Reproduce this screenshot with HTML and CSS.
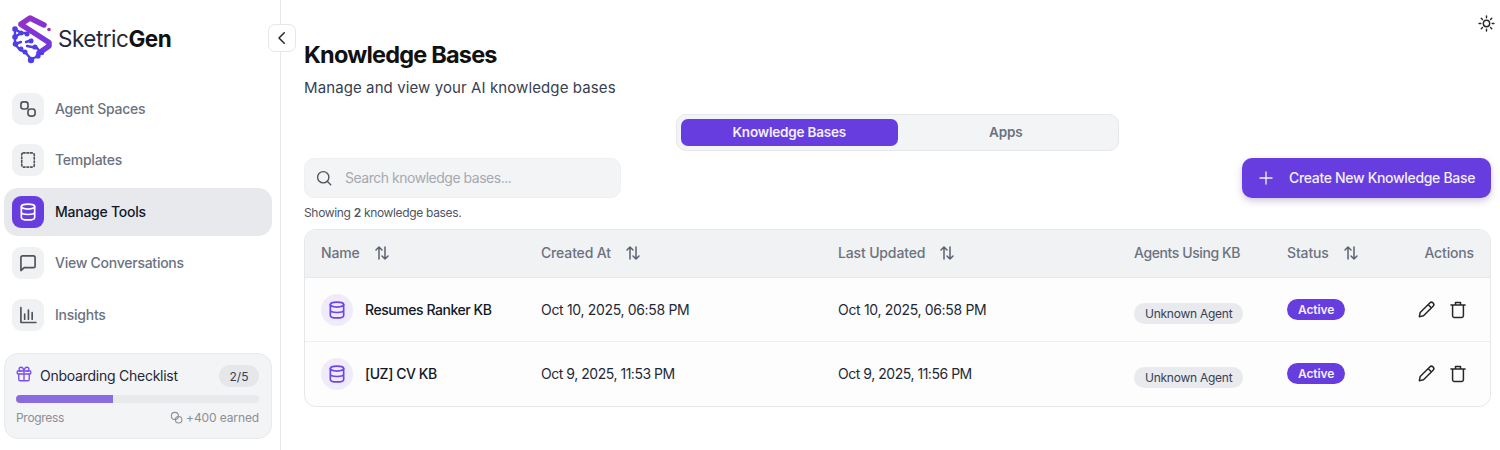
FILE: index.html
```html
<!DOCTYPE html>
<html lang="en">
<head>
<meta charset="utf-8">
<title>Knowledge Bases</title>
<link rel="stylesheet" href="styles.css">
</head>
<body>
<div class="app">
  <aside class="sidebar">
    <div class="brand">
      <svg class="logo" viewBox="0 0 40 50" width="40" height="50">
        <defs>
          <linearGradient id="lg" x1="6" y1="0" x2="40" y2="38" gradientUnits="userSpaceOnUse">
            <stop offset="0" stop-color="#9a2fc4"/><stop offset="1" stop-color="#6a3ae2"/>
          </linearGradient>
        </defs>
        <path class="logo-s" d="M9 10 18 4 32 11M9 10.500 37 28.500V32L27 39"/>
        <circle class="logo-dot" cx="37" cy="15.500" r="1.800"/>
        <path class="logo-net" d="M3 15V30L8 36 13 38 19 45 27 42M3 15 9 19 14 19M3 23 9 19M3 30 9 28M14 28 20 26M15 32 25 34 29 39"/>
        <g class="logo-nodes">
          <circle cx="3" cy="15" r="2.800"/><circle cx="3" cy="23" r="2.800"/><circle cx="3.500" cy="30" r="2.800"/>
          <circle cx="9" cy="19" r="2.500"/><circle cx="15" cy="20" r="2.500"/><circle cx="9" cy="35" r="2.500"/>
          <circle cx="13" cy="38" r="2.500"/><circle cx="19" cy="46" r="3.200"/><circle cx="26" cy="42" r="2.600"/>
          <circle cx="30" cy="39" r="2.200"/><circle cx="23" cy="33" r="2.600"/><circle cx="19" cy="27" r="2.500"/>
        </g>
      </svg>
      <div class="wordmark">Sketric<b>Gen</b></div>
    </div>
    <nav class="nav">
      <a class="nav-item">
        <span class="nav-icon"><svg class="ic" viewBox="0 0 24 24"><rect x="3.500" y="3.500" width="8.500" height="8.500" rx="3"/><rect x="12" y="12" width="8.500" height="8.500" rx="3"/></svg></span>
        <span class="nav-label">Agent Spaces</span>
      </a>
      <a class="nav-item">
        <span class="nav-icon"><svg class="ic" viewBox="0 0 24 24"><rect class="dash" x="4.500" y="3.500" width="15" height="17" rx="2"/></svg></span>
        <span class="nav-label">Templates</span>
      </a>
      <a class="nav-item active">
        <span class="nav-icon"><svg class="ic" viewBox="0 0 24 24"><ellipse cx="12" cy="5.500" rx="8" ry="3"/><path d="M4 5.500v13c0 1.700 3.600 3 8 3s8-1.300 8-3v-13M4 12c0 1.700 3.600 3 8 3s8-1.300 8-3"/></svg></span>
        <span class="nav-label">Manage Tools</span>
      </a>
      <a class="nav-item">
        <span class="nav-icon"><svg class="ic" viewBox="0 0 24 24"><path d="M3.500 5.500a2 2 0 0 1 2-2h13a2 2 0 0 1 2 2v10a2 2 0 0 1-2 2H7.500l-4 3.500z"/></svg></span>
        <span class="nav-label">View Conversations</span>
      </a>
      <a class="nav-item">
        <span class="nav-icon"><svg class="ic" viewBox="0 0 24 24"><path d="M3.500 3v18h18M8 17v-6M12.500 17V6M17 17v-8"/></svg></span>
        <span class="nav-label">Insights</span>
      </a>
    </nav>
    <section class="checklist">
      <div class="check-head">
        <svg class="gift" viewBox="0 0 24 24"><rect x="3" y="8" width="18" height="4" rx="1"/><path d="M5 12v7a2 2 0 0 0 2 2h10a2 2 0 0 0 2-2v-7M12 8v13M12 8S11 3 8 3a2.500 2.500 0 0 0 0 5M12 8s1-5 4-5a2.500 2.500 0 0 1 0 5"/></svg>
        <span class="check-title">Onboarding Checklist</span>
        <span class="check-count">2/5</span>
      </div>
      <div class="progress"><div class="progress-fill"></div></div>
      <div class="check-foot">
        <span>Progress</span>
        <span class="earned"><svg class="coins" viewBox="0 0 24 24"><circle cx="9" cy="9" r="6.500"/><circle cx="16" cy="16" r="6"/></svg>+400 earned</span>
      </div>
    </section>
  </aside>
  <button class="collapse" aria-label="Collapse"><svg class="ic" viewBox="0 0 24 24"><path d="M15 5l-7 7 7 7"/></svg></button>
  <main class="main">
    <div class="top"><svg class="sun" viewBox="0 0 24 24"><circle cx="12" cy="12" r="4.500"/><path d="M12 1.500v2.500M12 20v2.500M1.500 12H4M20 12h2.500M4.600 4.600l1.700 1.700M17.700 17.700l1.700 1.700M4.600 19.400l1.700-1.700M17.700 6.300l1.700-1.700"/></svg></div>
    <h1 class="title">Knowledge Bases</h1>
    <p class="subtitle">Manage and view your AI knowledge bases</p>
    <div class="tabs-wrap">
      <div class="tabs">
        <div class="tab on">Knowledge Bases</div>
        <div class="tab">Apps</div>
      </div>
    </div>
    <div class="toolbar">
      <div class="search">
        <svg class="search-ic" viewBox="0 0 24 24"><circle cx="11" cy="11" r="7.500"/><path d="M21 21l-4.700-4.700"/></svg>
        <span class="search-text">Search knowledge bases...</span>
      </div>
      <button class="create"><svg class="plus" viewBox="0 0 24 24"><path d="M12 4v16M4 12h16"/></svg><span class="create-text">Create New Knowledge Base</span></button>
    </div>
    <p class="count">Showing <b>2</b> knowledge bases.</p>
    <div class="table">
      <div class="row head">
        <div class="cell">Name<svg class="sort" viewBox="0 0 24 24"><path d="M8 20V4M4 8l4-4 4 4M16 4v16M12 16l4 4 4-4"/></svg></div>
        <div class="cell">Created At<svg class="sort" viewBox="0 0 24 24"><path d="M8 20V4M4 8l4-4 4 4M16 4v16M12 16l4 4 4-4"/></svg></div>
        <div class="cell">Last Updated<svg class="sort" viewBox="0 0 24 24"><path d="M8 20V4M4 8l4-4 4 4M16 4v16M12 16l4 4 4-4"/></svg></div>
        <div class="cell tight">Agents Using KB</div>
        <div class="cell">Status<svg class="sort" viewBox="0 0 24 24"><path d="M8 20V4M4 8l4-4 4 4M16 4v16M12 16l4 4 4-4"/></svg></div>
        <div class="cell end">Actions</div>
      </div>
      <div class="row body">
        <div class="cell name"><span class="db"><svg viewBox="0 0 24 24"><ellipse cx="12" cy="5.500" rx="8" ry="3"/><path d="M4 5.500v13c0 1.700 3.600 3 8 3s8-1.300 8-3v-13M4 12c0 1.700 3.600 3 8 3s8-1.300 8-3"/></svg></span>Resumes Ranker KB</div>
        <div class="cell">Oct 10, 2025, 06:58 PM</div>
        <div class="cell">Oct 10, 2025, 06:58 PM</div>
        <div class="cell"><span class="agent">Unknown Agent</span></div>
        <div class="cell"><span class="status">Active</span></div>
        <div class="cell actions">
          <svg viewBox="0 0 24 24"><path d="M4 20l1-5L16.500 3.500a2.800 2.800 0 0 1 4 4L9 19zM14.500 5.500l4 4"/></svg>
          <svg viewBox="0 0 24 24"><path d="M3.500 6h17M9 6V3h6v3M5.500 6v13a2 2 0 0 0 2 2h9a2 2 0 0 0 2-2V6"/></svg>
        </div>
      </div>
      <div class="row body">
        <div class="cell name"><span class="db"><svg viewBox="0 0 24 24"><ellipse cx="12" cy="5.500" rx="8" ry="3"/><path d="M4 5.500v13c0 1.700 3.600 3 8 3s8-1.300 8-3v-13M4 12c0 1.700 3.600 3 8 3s8-1.300 8-3"/></svg></span>[UZ] CV KB</div>
        <div class="cell short">Oct 9, 2025, 11:53 PM</div>
        <div class="cell short">Oct 9, 2025, 11:56 PM</div>
        <div class="cell"><span class="agent">Unknown Agent</span></div>
        <div class="cell"><span class="status">Active</span></div>
        <div class="cell actions">
          <svg viewBox="0 0 24 24"><path d="M4 20l1-5L16.500 3.500a2.800 2.800 0 0 1 4 4L9 19zM14.500 5.500l4 4"/></svg>
          <svg viewBox="0 0 24 24"><path d="M3.500 6h17M9 6V3h6v3M5.500 6v13a2 2 0 0 0 2 2h9a2 2 0 0 0 2-2V6"/></svg>
        </div>
      </div>
    </div>
  </main>
</div>
</body>
</html>
```
FILE: styles.css
```css
* { box-sizing: border-box; }
html, body { margin: 0; height: 450px; overflow: hidden; background: #fff; }
body { font-family: "Inter", "Noto Sans", sans-serif; color: #111827; font-size: 14px; }
svg { fill: none; stroke: currentColor; stroke-width: 2; stroke-linecap: round; stroke-linejoin: round; display: block; }
.app { display: flex; height: 450px; position: relative; }

.sidebar { width: 281px; flex: none; border-right: 1px solid #e5e7eb; padding: 14px 8px 11px 4px; display: flex; flex-direction: column; }
.brand { display: flex; align-items: center; height: 50px; padding-left: 8px; gap: 6px; }
.logo { flex: none; width: 40px; height: 50px; }
.logo-s { stroke: url(#lg); stroke-width: 5.500; stroke-linecap: round; }
.logo-dot { fill: #a02fc0; stroke: none; }
.logo-net { stroke: #4f3fe6; stroke-width: 2.400; }
.logo-nodes circle { fill: #4f3fe6; stroke: none; }
.wordmark { font-size: 22.500px; letter-spacing: -0.5px; font-weight: 400; color: #1f2937; margin-top: -1px; }
.wordmark b { font-weight: 700; color: #111; }
.nav { margin-top: 21px; display: flex; flex-direction: column; gap: 3.400px; }
.nav-item { height: 48px; border-radius: 14px; display: flex; align-items: center; gap: 11px; padding-left: 8px; color: #6b7280; font-weight: 500; font-size: 14px; letter-spacing: -0.25px; }
.nav-label { margin-top: -1px; }
.nav-icon { width: 32px; height: 32px; border-radius: 9px; background: #f0f1f3; display: flex; align-items: center; justify-content: center; color: #52525b; }
.ic { width: 20px; height: 20px; }
.dash { stroke-dasharray: 2 2.300; }
.nav-item.active { background: #e8e9ed; color: #111827; }
.nav-item.active .nav-icon { background: #673de0; color: #fff; }
.checklist { margin-top: auto; height: 86px; border: 1px solid #e9eaee; background: #f3f4f6; border-radius: 14px; padding: 11px 12px 0 11px; }
.check-head { display: flex; align-items: center; height: 22px; }
.gift { width: 18px; height: 18px; color: #7c4deb; margin: -4px 0 0 -1px; stroke-width: 1.800; }
.check-title { margin-left: 7px; margin-top: -2px; color: #1f2937; font-weight: 400; font-size: 14px; letter-spacing: -0.25px; }
.check-count { margin-left: auto; background: #e6e7ea; color: #374151; font-size: 12px; border-radius: 11px; height: 22px; width: 40px; display: flex; align-items: center; justify-content: center; }
.progress { height: 8px; border-radius: 4px; background: #e8e9ec; margin-top: 8px; overflow: hidden; }
.progress-fill { width: 40%; height: 100%; background: #8b6ce0; }
.check-foot { display: flex; justify-content: space-between; font-size: 12px; color: #8b8f97; margin-top: 7px; letter-spacing: -0.3px; }
.earned { display: flex; align-items: center; gap: 3px; letter-spacing: -0.12px; }
.coins { width: 13px; height: 13px; stroke-width: 2; }

.collapse { position: absolute; left: 268px; top: 24px; width: 28px; height: 28px; border: 1px solid #e5e7eb; border-radius: 7px; background: #fff; display: flex; align-items: center; justify-content: center; padding: 0; color: #27272a; }
.collapse .ic { width: 18px; height: 18px; }

.main { flex: 1; min-width: 0; padding: 16px 9px 0 23px; }
.top { display: flex; justify-content: flex-end; height: 14px; }
.sun { width: 17px; height: 17px; color: #27272a; margin: -1px -4px 0 0; }
.title { margin: 10px 0 0; font-size: 23.500px; line-height: 30px; font-weight: 700; letter-spacing: -0.8px; color: #111; }
.subtitle { margin: 8px 0 0; font-size: 15px; line-height: 20px; color: #374151; letter-spacing: 0.1px; }
.tabs-wrap { display: flex; justify-content: center; margin-top: 16px; }
.tabs { width: 443px; height: 37px; background: #f3f4f6; border: 1px solid #e5e7eb; border-radius: 10px; padding: 4px; display: grid; grid-template-columns: 1fr 1fr; }
.tab { display: flex; align-items: center; justify-content: center; border-radius: 7px; font-weight: 600; font-size: 13.500px; color: #6b7280; letter-spacing: -0.2px; padding-bottom: 1px; }
.tab.on { background: #673de0; color: #f3effd; }
.toolbar { display: flex; justify-content: space-between; margin-top: 7px; }
.search { width: 317px; height: 40px; background: #f3f4f6; border: 1px solid #eff0f2; border-radius: 10px; display: flex; align-items: center; padding-left: 9.500px; gap: 12.500px; color: #a6a9b0; font-size: 14px; letter-spacing: -0.48px; }
.search-text, .create-text { margin-top: -1px; }
.search-ic { width: 18px; height: 18px; color: #52525b; stroke-width: 1.800; }
.create { width: 249px; height: 40px; border: 0; border-radius: 10px; background: #673de0; color: #f3effd; box-shadow: 0 3px 7px rgba(60, 40, 120, .25); display: flex; align-items: center; padding: 0 0 0 15px; gap: 14px; font: 500 14px "Inter", sans-serif; letter-spacing: -0.32px; }
.plus { width: 18px; height: 18px; stroke-width: 1.800; }
.count { margin: 7px 0 0; font-size: 12px; line-height: 16px; color: #4b5563; letter-spacing: -0.33px; }
.count b { font-weight: 600; }
.table { margin-top: 8px; width: 1187px; border: 1px solid #e5e7eb; border-radius: 12px; overflow: hidden; background: #fdfdfd; }
.row { display: grid; grid-template-columns: 220px 297px 296px 153px 1fr auto; align-items: center; }
.row > .cell { padding: 0 16px; display: flex; align-items: center; }
.row.head { height: 48px; background: #f1f2f4; border-bottom: 1px solid #e8e9ec; color: #6b7280; font-weight: 500; font-size: 14px; letter-spacing: -0.15px; padding-bottom: 2px; }
.row.head .cell:last-child { width: 86px; padding: 0 16px 0 0; justify-content: flex-end; }
.row.body .cell:last-child { width: 86px; padding: 0 22px 0 0; justify-content: flex-end; }
.row > .cell.tight { letter-spacing: -0.4px; }
.sort { width: 18px; height: 18px; margin-left: 13px; color: #5b6270; stroke-width: 2; }
.row.body { height: 64px; border-bottom: 1px solid #eeeff1; font-size: 14px; color: #1f2937; letter-spacing: -0.33px; }
.row.body:last-child { border-bottom-color: transparent; }
.row > .cell.short { letter-spacing: -0.47px; }
.row > .name { font-weight: 450; color: #111827; letter-spacing: -0.45px; }
.db { width: 32px; height: 32px; border-radius: 50%; background: #efebfb; color: #6d46e4; display: flex; align-items: center; justify-content: center; margin-right: 12px; flex: none; }
.db svg { width: 20px; height: 20px; }
.agent { background: #e9eaee; color: #374151; font-size: 12px; line-height: 21px; padding: 0 11px; border-radius: 11px; margin-top: 8px; letter-spacing: -0.25px; }
.status { background: #673de0; color: #f3effd; font-size: 12px; font-weight: 600; line-height: 21px; padding: 0 11px; border-radius: 11px; margin-top: -1px; letter-spacing: -0.1px; }
.row.body .actions { gap: 12px; color: #27272a; }
.actions svg { width: 20px; height: 20px; stroke-width: 1.800; }
```
